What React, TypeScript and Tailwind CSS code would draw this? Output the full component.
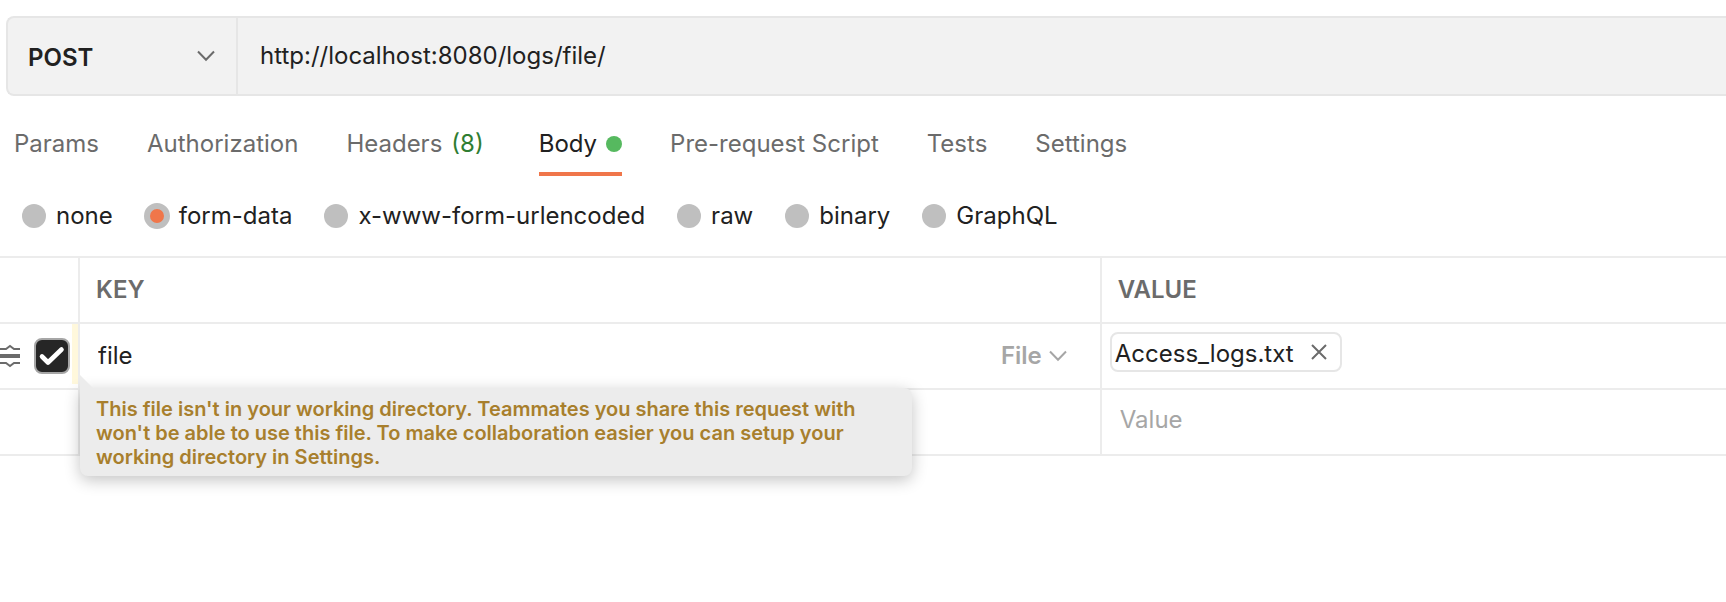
import { useState } from "react";

const tabs = ["Params", "Authorization", "Headers", "Body", "Pre-request Script", "Tests", "Settings"];
const bodyTypes = ["none", "form-data", "x-www-form-urlencoded", "raw", "binary", "GraphQL"];

function Chevron({ className }: { className: string }) {
  return (
    <svg className={className} width="18" height="12" viewBox="0 0 18 12" fill="none" stroke="currentColor" strokeWidth="2" aria-hidden="true">
      <path d="M1 1.5 9 9.7l8-8.2" />
    </svg>
  );
}

function DragHandle() {
  return (
    <svg width="20" height="24" viewBox="0 0 20 24" fill="none" stroke="#6b6b6b" strokeWidth="2" aria-hidden="true">
      <path d="M0 5h6l4-3 4 3h6M0 19h6l4 3 4-3h6" />
      <path d="M0 12h20" strokeWidth="4" />
    </svg>
  );
}

function UrlBar() {
  return (
    <div className="ml-[6px] flex h-20 rounded-l-lg border-2 border-r-0 border-[#e6e6e6] bg-[#f2f2f2]">
      <div className="relative flex w-[230px] shrink-0 items-center border-r-2 border-[#e6e6e6]">
        <select
          aria-label="Request method"
          defaultValue="POST"
          className="h-full w-full appearance-none bg-transparent pl-5 pt-1 font-semibold text-[#212121] outline-none"
        >
          <option>POST</option>
          <option>GET</option>
          <option>PUT</option>
          <option>DELETE</option>
        </select>
        <Chevron className="pointer-events-none absolute right-[21px] text-[#6b6b6b]" />
      </div>
      <input
        type="text"
        aria-label="Request URL"
        defaultValue="http://localhost:8080/logs/file/"
        className="min-w-0 flex-1 bg-transparent pl-[22px] text-[#212121] outline-none"
      />
    </div>
  );
}

function Tabs() {
  const [active, setActive] = useState("Body");
  return (
    <div role="tablist" className="mt-6 flex gap-12 pl-[14px]">
      {tabs.map((tab) => (
        <button
          key={tab}
          role="tab"
          type="button"
          aria-selected={tab === active}
          onClick={() => setActive(tab)}
          className={
            "flex h-14 items-center gap-[9px] whitespace-nowrap border-b-4 pb-1 " +
            (tab === active ? "border-[#f0764a] text-[#212121]" : "border-transparent text-[#6b6b6b]")
          }
        >
          {tab}
          {tab === "Headers" && <span className="pr-[7px] text-[#2f7d32]">(8)</span>}
          {tab === "Body" && <span className="size-4 rounded-full bg-[#56b95f]" />}
        </button>
      ))}
    </div>
  );
}

function BodyTypes() {
  return (
    <fieldset className="flex h-20 items-center gap-8 pl-[22px]">
      {bodyTypes.map((type) => (
        <label key={type} className="flex items-center gap-[10px] whitespace-nowrap text-[#212121]">
          <input
            type="radio"
            name="body-type"
            defaultChecked={type === "form-data"}
            className="size-6 shrink-0 appearance-none rounded-full bg-[#bfbfbf] checked:-mx-px checked:size-[26px] checked:border-[6px] checked:border-[#bfbfbf] checked:bg-[#f0764a]"
          />
          {type}
        </label>
      ))}
    </fieldset>
  );
}

function FormTable() {
  const line = "h-[66px] border-b-2 border-[#ececec] p-0 ";
  return (
    <table className="w-full table-fixed border-separate border-spacing-0 border-t-2 border-[#ececec]">
      <colgroup>
        <col className="w-20" />
        <col className="w-[59.2%]" />
        <col />
      </colgroup>
      <thead>
        <tr className="text-left text-[#6b6b6b]">
          <td className={line + "border-r-2"} />
          <th scope="col" className={line + "border-r-2 pl-4 font-semibold"}>KEY</th>
          <th scope="col" className={line + "pl-4 font-semibold"}>VALUE</th>
        </tr>
      </thead>
      <tbody>
        <tr>
          <td className={line + "border-r-2"}>
            <div className="flex h-16 items-center">
              <DragHandle />
              <span className="relative ml-[14px] flex size-9 shrink-0">
                <input
                  type="checkbox"
                  aria-label="Include file"
                  defaultChecked
                  className="peer size-9 appearance-none rounded-lg border-2 border-[#a6a6a6] bg-white checked:bg-[#262626]"
                />
                <svg
                  className="pointer-events-none absolute inset-0 hidden peer-checked:block"
                  width="36" height="36" viewBox="0 0 36 36" fill="none" stroke="white" strokeWidth="4.600" strokeLinecap="round" strokeLinejoin="round" aria-hidden="true"
                >
                  <path d="m8 18.500 6 6L27.500 11.500" />
                </svg>
              </span>
              <span className="mb-1 ml-auto h-[60px] w-[6px] bg-[#fff8dc]" />
            </div>
          </td>
          <td className={line + "border-r-2"}>
            <div className="relative flex h-16 items-center">
              <input type="text" aria-label="Key" defaultValue="file" className="min-w-0 flex-1 pl-[18px] text-[#212121] outline-none" />
              <div className="relative mr-[33px] flex items-center">
                <select aria-label="Field type" defaultValue="File" className="field-sizing-content appearance-none pr-[25px] font-semibold text-[#a6a6a6] outline-none">
                  <option>File</option>
                  <option>Text</option>
                </select>
                <Chevron className="pointer-events-none absolute right-0 text-[#a6a6a6]" />
              </div>
              <div
                role="tooltip"
                className="absolute left-0 top-16 z-10 w-[832px] rounded-lg rounded-tl-none bg-[#ececec] pt-[9px] pr-10 pb-[7px] pl-4 text-xl leading-6 font-semibold text-[#a87f2d] shadow-[0_4px_16px_rgba(0,0,0,0.24)]"
              >
                <svg className="absolute -top-[13px] left-0" width="14" height="14" viewBox="0 0 14 14" aria-hidden="true">
                  <path d="M0 0v14h14Z" fill="#ececec" />
                </svg>
                This file isn't in your working directory. Teammates you share this request with won't be able to use this file. To make collaboration easier you can setup your working directory in Settings.
              </div>
            </div>
          </td>
          <td className={line + "pl-2 align-top"}>
            <div className="mt-2 flex h-10 w-fit items-center gap-4 rounded-lg border-2 border-[#e6e6e6] pt-1 pl-[3px] pr-3 text-[#212121]">
              Access_logs.txt
              <button type="button" aria-label="Remove Access_logs.txt" className="pb-1 text-[#6b6b6b]">
                <svg width="18" height="18" viewBox="0 0 18 18" fill="none" stroke="currentColor" strokeWidth="2" aria-hidden="true">
                  <path d="m2 2 14 14M16 2 2 16" />
                </svg>
              </button>
            </div>
          </td>
        </tr>
        <tr>
          <td className={line + "border-r-2"} />
          <td className={line + "border-r-2"}>
            <input type="text" aria-label="New key" className="w-full pl-[18px] outline-none" />
          </td>
          <td className={line}>
            <input type="text" aria-label="New value" placeholder="Value" className="w-full pb-1 pl-[18px] outline-none placeholder:text-[#a6a6a6]" />
          </td>
        </tr>
      </tbody>
    </table>
  );
}

export default function App() {
  return (
    <main className="min-h-screen overflow-x-hidden bg-white pt-4 font-['Inter',sans-serif] text-2xl">
      <UrlBar />
      <Tabs />
      <BodyTypes />
      <FormTable />
    </main>
  );
}
